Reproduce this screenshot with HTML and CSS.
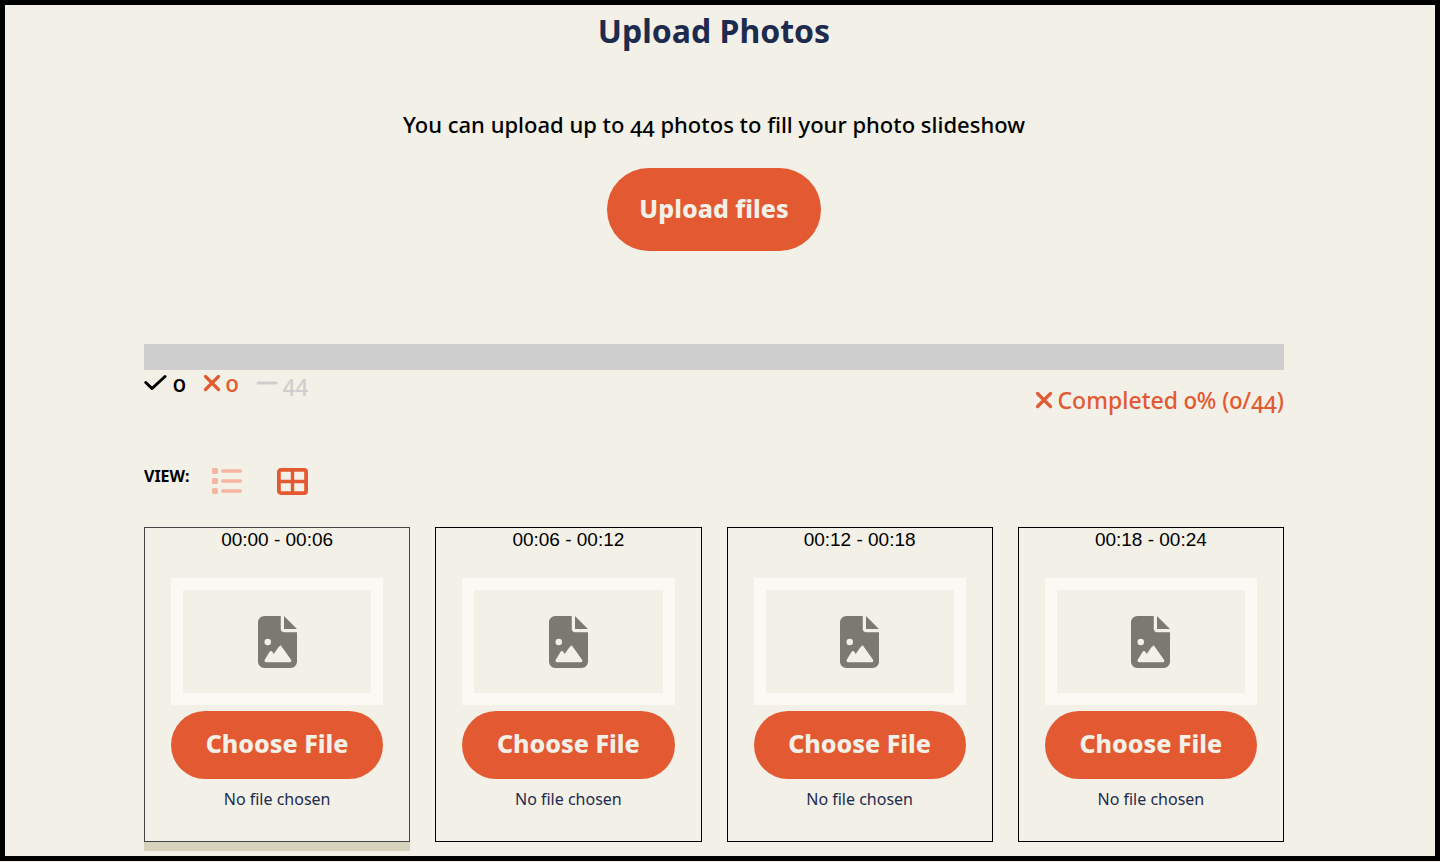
FILE: index.html
```
<!DOCTYPE html>
<html lang="en">
<head>
    <meta charset="utf-8">
    <title>Upload Photos</title>
    <link rel="stylesheet" href="styles.css">
</head>
<body>
    <svg class="sprite" aria-hidden="true">
        <symbol id="cross" viewBox="0 0 18 18">
            <path d="M2.5 2.5l13 13M15.5 2.5l-13 13" fill="none" stroke="currentColor" stroke-width="3.2" stroke-linecap="round"/>
        </symbol>
        <symbol id="file-image" viewBox="0 0 384 512">
            <path fill="currentColor" fill-rule="evenodd" d="M64 0C28.7 0 0 28.7 0 64V448c0 35.3 28.7 64 64 64H320c35.3 0 64-28.7 64-64V160H256c-17.7 0-32-14.3-32-32V0H64zM256 0V128H384L256 0zM64 256a32 32 0 1 1 64 0 32 32 0 1 1-64 0zm152 32c5.3 0 10.2 2.6 13.2 6.9l96 136c3.4 4.9 3.8 11.3 1.1 16.6s-8.2 8.6-14.2 8.6H80c-5.8 0-11.1-3.1-13.9-8.1s-2.8-11.2.2-16.1l48-80c2.9-4.8 8.1-7.8 13.7-7.8s10.8 2.9 13.7 7.8l12.8 21.4 48.3-68.4c3-4.3 7.9-6.9 13.2-6.9z"/>
        </symbol>
    </svg>

    <div class="frame">
        <div class="container">
            <h1>Upload Photos</h1>
            <p class="intro">You can upload up to 44 photos to fill your photo slideshow</p>
            <button type="button" class="btn upload-btn">Upload files</button>

            <div class="progress"></div>
            <div class="status">
                <div class="counts">
                    <span class="count done">
                        <svg width="24" height="18" viewBox="0 0 24 18"><path d="M1.8 8.5l6.2 6L21 2.5" fill="none" stroke="currentColor" stroke-width="3" stroke-linecap="round" stroke-linejoin="round"/></svg>
                        0
                    </span>
                    <span class="count failed">
                        <svg width="18" height="18"><use href="#cross"/></svg>
                        0
                    </span>
                    <span class="count left">
                        <svg width="22" height="18" viewBox="0 0 22 18"><path d="M2 9h18" stroke="currentColor" stroke-width="3" stroke-linecap="round"/></svg>
                        44
                    </span>
                </div>
                <div class="completed">
                    <svg width="18" height="18"><use href="#cross"/></svg>
                    Completed 0% (0/44)
                </div>
            </div>

            <div class="view">
                <span class="view-label">VIEW:</span>
                <button type="button" class="view-btn list" aria-label="List view">
                    <svg width="30" height="26" viewBox="0 0 30 26" fill="currentColor">
                        <rect x="0" y="0" width="6" height="6" rx="1.5"/>
                        <rect x="0" y="10" width="6" height="6" rx="1.5"/>
                        <rect x="0" y="20" width="6" height="6" rx="1.5"/>
                        <rect x="9" y="1.2" width="21" height="3.6" rx="1.8"/>
                        <rect x="9" y="11.2" width="21" height="3.6" rx="1.8"/>
                        <rect x="9" y="21.2" width="21" height="3.6" rx="1.8"/>
                    </svg>
                </button>
                <button type="button" class="view-btn" aria-label="Grid view">
                    <svg width="31" height="27" viewBox="0 0 31 27" fill="none" stroke="currentColor">
                        <rect x="1.9" y="1.9" width="27.2" height="23.2" rx="2" stroke-width="3.8"/>
                        <path d="M15.5 2v23M2 13.5h27" stroke-width="3.4"/>
                    </svg>
                </button>
            </div>

            <div class="cards">
                <div class="card active">
                    <div class="time">00:00 - 00:06</div>
                    <div class="thumb"><svg width="39" height="52"><use href="#file-image"/></svg></div>
                    <button type="button" class="btn choose-btn">Choose File</button>
                    <div class="file-name">No file chosen</div>
                </div>
                <div class="card">
                    <div class="time">00:06 - 00:12</div>
                    <div class="thumb"><svg width="39" height="52"><use href="#file-image"/></svg></div>
                    <button type="button" class="btn choose-btn">Choose File</button>
                    <div class="file-name">No file chosen</div>
                </div>
                <div class="card">
                    <div class="time">00:12 - 00:18</div>
                    <div class="thumb"><svg width="39" height="52"><use href="#file-image"/></svg></div>
                    <button type="button" class="btn choose-btn">Choose File</button>
                    <div class="file-name">No file chosen</div>
                </div>
                <div class="card">
                    <div class="time">00:18 - 00:24</div>
                    <div class="thumb"><svg width="39" height="52"><use href="#file-image"/></svg></div>
                    <button type="button" class="btn choose-btn">Choose File</button>
                    <div class="file-name">No file chosen</div>
                </div>
            </div>
        </div>
    </div>
</body>
</html>
```
FILE: styles.css
```
* {
    box-sizing: border-box;
}

body {
    margin: 0;
    background-color: #f2f0e7;
    color: #000;
    font-family: "Noto Sans", sans-serif;
    font-variant-numeric: oldstyle-nums;
}

svg {
    display: block;
    flex-shrink: 0;
}

.sprite {
    display: none;
}

.frame {
    min-height: calc(100vh - 1px);
    border: 5px solid #000;
    padding: 0 12px 13px 0;
}

.container {
    max-width: 1140px;
    margin: 0 auto;
    display: flex;
    flex-direction: column;
}

h1 {
    margin: 4px 0 0;
    color: #1d2b4f;
    font-size: 32px;
    line-height: 44px;
    text-align: center;
}

.intro {
    margin: 55px 0 0;
    font-size: 22px;
    font-weight: 500;
    line-height: 32px;
    text-align: center;
}

.btn {
    border: none;
    padding: 0 0 4px;
    background-color: #e35a32;
    color: #f2f0e7;
    font-family: inherit;
    font-size: 25px;
    font-weight: 800;
    cursor: pointer;
}

.upload-btn {
    align-self: center;
    width: 214px;
    height: 83px;
    margin-top: 28px;
    border-radius: 42px;
}

.progress {
    height: 26px;
    margin-top: 93px;
    background-color: #cecece;
}

.status {
    display: flex;
    justify-content: space-between;
    height: 46px;
    font-size: 23px;
    font-weight: 500;
    line-height: 32px;
}

.counts {
    display: flex;
    gap: 17px;
    height: 26px;
}

.count,
.completed {
    display: flex;
    align-items: center;
    gap: 5px;
}

.failed,
.completed {
    color: #e35a32;
}

.completed {
    align-self: flex-end;
}

.left {
    color: #cecece;
}

.view {
    display: flex;
    align-items: flex-start;
    margin-top: 52px;
}

.view-label {
    width: 68px;
    font-size: 16px;
    font-weight: 700;
    line-height: 16px;
}

.view-btn {
    border: none;
    padding: 0;
    background: none;
    color: #e35a32;
    cursor: pointer;
}

.view-btn.list {
    margin-right: 35px;
    color: #f6b5a0;
}

.cards {
    display: grid;
    grid-template-columns: repeat(4, 1fr);
    gap: 25px;
    margin-top: 32px;
}

.card {
    display: flex;
    flex-direction: column;
    border: 1px solid #000;
    padding: 0 26px 30px;
    text-align: center;
}

.card.active {
    border-color: #444;
    box-shadow: 0 9px 0 #d6d2bb;
}

.time {
    font-family: "Liberation Sans", Arial, sans-serif;
    font-size: 19px;
    font-variant-numeric: normal;
    line-height: 24px;
}

.thumb {
    display: flex;
    align-items: center;
    justify-content: center;
    height: 127px;
    margin-top: 26px;
    border: 12px solid #faf9f4;
    color: #7a7972;
}

.choose-btn {
    height: 68px;
    margin-top: 6px;
    border-radius: 34px;
}

.file-name {
    margin-top: 8px;
    color: #1d2b4f;
    font-size: 16px;
    line-height: 24px;
}
```
